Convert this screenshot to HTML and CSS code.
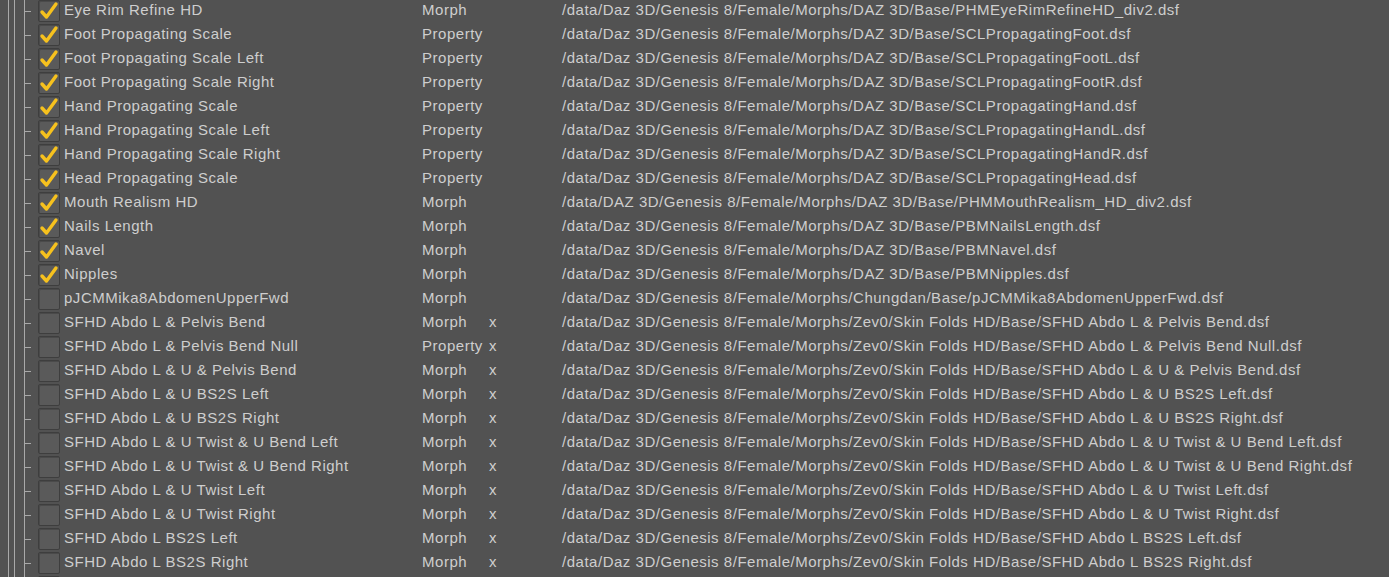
FILE: index.html
```html
<!DOCTYPE html>
<html lang="en">
<head>
    <meta charset="UTF-8">
    <title>Morph List</title>
    <link rel="stylesheet" href="styles.css">
</head>
<body>
    <div class="list">
        <div class="row"><span class="tree"></span><span class="check on"><svg viewBox="0 0 22 22"><path d="M4 12 L8.5 17 L18 4"/></svg></span><span class="name">Eye Rim Refine HD</span><span class="type">Morph</span><span class="flag"></span><span class="path">/data/Daz 3D/Genesis 8/Female/Morphs/DAZ 3D/Base/PHMEyeRimRefineHD_div2.dsf</span></div>
        <div class="row"><span class="tree"></span><span class="check on"><svg viewBox="0 0 22 22"><path d="M4 12 L8.5 17 L18 4"/></svg></span><span class="name">Foot Propagating Scale</span><span class="type">Property</span><span class="flag"></span><span class="path">/data/Daz 3D/Genesis 8/Female/Morphs/DAZ 3D/Base/SCLPropagatingFoot.dsf</span></div>
        <div class="row"><span class="tree"></span><span class="check on"><svg viewBox="0 0 22 22"><path d="M4 12 L8.5 17 L18 4"/></svg></span><span class="name">Foot Propagating Scale Left</span><span class="type">Property</span><span class="flag"></span><span class="path">/data/Daz 3D/Genesis 8/Female/Morphs/DAZ 3D/Base/SCLPropagatingFootL.dsf</span></div>
        <div class="row"><span class="tree"></span><span class="check on"><svg viewBox="0 0 22 22"><path d="M4 12 L8.5 17 L18 4"/></svg></span><span class="name">Foot Propagating Scale Right</span><span class="type">Property</span><span class="flag"></span><span class="path">/data/Daz 3D/Genesis 8/Female/Morphs/DAZ 3D/Base/SCLPropagatingFootR.dsf</span></div>
        <div class="row"><span class="tree"></span><span class="check on"><svg viewBox="0 0 22 22"><path d="M4 12 L8.5 17 L18 4"/></svg></span><span class="name">Hand Propagating Scale</span><span class="type">Property</span><span class="flag"></span><span class="path">/data/Daz 3D/Genesis 8/Female/Morphs/DAZ 3D/Base/SCLPropagatingHand.dsf</span></div>
        <div class="row"><span class="tree"></span><span class="check on"><svg viewBox="0 0 22 22"><path d="M4 12 L8.5 17 L18 4"/></svg></span><span class="name">Hand Propagating Scale Left</span><span class="type">Property</span><span class="flag"></span><span class="path">/data/Daz 3D/Genesis 8/Female/Morphs/DAZ 3D/Base/SCLPropagatingHandL.dsf</span></div>
        <div class="row"><span class="tree"></span><span class="check on"><svg viewBox="0 0 22 22"><path d="M4 12 L8.5 17 L18 4"/></svg></span><span class="name">Hand Propagating Scale Right</span><span class="type">Property</span><span class="flag"></span><span class="path">/data/Daz 3D/Genesis 8/Female/Morphs/DAZ 3D/Base/SCLPropagatingHandR.dsf</span></div>
        <div class="row"><span class="tree"></span><span class="check on"><svg viewBox="0 0 22 22"><path d="M4 12 L8.5 17 L18 4"/></svg></span><span class="name">Head Propagating Scale</span><span class="type">Property</span><span class="flag"></span><span class="path">/data/Daz 3D/Genesis 8/Female/Morphs/DAZ 3D/Base/SCLPropagatingHead.dsf</span></div>
        <div class="row"><span class="tree"></span><span class="check on"><svg viewBox="0 0 22 22"><path d="M4 12 L8.5 17 L18 4"/></svg></span><span class="name">Mouth Realism HD</span><span class="type">Morph</span><span class="flag"></span><span class="path">/data/DAZ 3D/Genesis 8/Female/Morphs/DAZ 3D/Base/PHMMouthRealism_HD_div2.dsf</span></div>
        <div class="row"><span class="tree"></span><span class="check on"><svg viewBox="0 0 22 22"><path d="M4 12 L8.5 17 L18 4"/></svg></span><span class="name">Nails Length</span><span class="type">Morph</span><span class="flag"></span><span class="path">/data/Daz 3D/Genesis 8/Female/Morphs/DAZ 3D/Base/PBMNailsLength.dsf</span></div>
        <div class="row"><span class="tree"></span><span class="check on"><svg viewBox="0 0 22 22"><path d="M4 12 L8.5 17 L18 4"/></svg></span><span class="name">Navel</span><span class="type">Morph</span><span class="flag"></span><span class="path">/data/Daz 3D/Genesis 8/Female/Morphs/DAZ 3D/Base/PBMNavel.dsf</span></div>
        <div class="row"><span class="tree"></span><span class="check on"><svg viewBox="0 0 22 22"><path d="M4 12 L8.5 17 L18 4"/></svg></span><span class="name">Nipples</span><span class="type">Morph</span><span class="flag"></span><span class="path">/data/Daz 3D/Genesis 8/Female/Morphs/DAZ 3D/Base/PBMNipples.dsf</span></div>
        <div class="row"><span class="tree"></span><span class="check"></span><span class="name">pJCMMika8AbdomenUpperFwd</span><span class="type">Morph</span><span class="flag"></span><span class="path">/data/Daz 3D/Genesis 8/Female/Morphs/Chungdan/Base/pJCMMika8AbdomenUpperFwd.dsf</span></div>
        <div class="row"><span class="tree"></span><span class="check"></span><span class="name">SFHD Abdo L &amp; Pelvis Bend</span><span class="type">Morph</span><span class="flag">x</span><span class="path">/data/Daz 3D/Genesis 8/Female/Morphs/Zev0/Skin Folds HD/Base/SFHD Abdo L &amp; Pelvis Bend.dsf</span></div>
        <div class="row"><span class="tree"></span><span class="check"></span><span class="name">SFHD Abdo L &amp; Pelvis Bend Null</span><span class="type">Property</span><span class="flag">x</span><span class="path">/data/Daz 3D/Genesis 8/Female/Morphs/Zev0/Skin Folds HD/Base/SFHD Abdo L &amp; Pelvis Bend Null.dsf</span></div>
        <div class="row"><span class="tree"></span><span class="check"></span><span class="name">SFHD Abdo L &amp; U &amp; Pelvis Bend</span><span class="type">Morph</span><span class="flag">x</span><span class="path">/data/Daz 3D/Genesis 8/Female/Morphs/Zev0/Skin Folds HD/Base/SFHD Abdo L &amp; U &amp; Pelvis Bend.dsf</span></div>
        <div class="row"><span class="tree"></span><span class="check"></span><span class="name">SFHD Abdo L &amp; U BS2S Left</span><span class="type">Morph</span><span class="flag">x</span><span class="path">/data/Daz 3D/Genesis 8/Female/Morphs/Zev0/Skin Folds HD/Base/SFHD Abdo L &amp; U BS2S Left.dsf</span></div>
        <div class="row"><span class="tree"></span><span class="check"></span><span class="name">SFHD Abdo L &amp; U BS2S Right</span><span class="type">Morph</span><span class="flag">x</span><span class="path">/data/Daz 3D/Genesis 8/Female/Morphs/Zev0/Skin Folds HD/Base/SFHD Abdo L &amp; U BS2S Right.dsf</span></div>
        <div class="row"><span class="tree"></span><span class="check"></span><span class="name">SFHD Abdo L &amp; U Twist &amp; U Bend Left</span><span class="type">Morph</span><span class="flag">x</span><span class="path">/data/Daz 3D/Genesis 8/Female/Morphs/Zev0/Skin Folds HD/Base/SFHD Abdo L &amp; U Twist &amp; U Bend Left.dsf</span></div>
        <div class="row"><span class="tree"></span><span class="check"></span><span class="name">SFHD Abdo L &amp; U Twist &amp; U Bend Right</span><span class="type">Morph</span><span class="flag">x</span><span class="path">/data/Daz 3D/Genesis 8/Female/Morphs/Zev0/Skin Folds HD/Base/SFHD Abdo L &amp; U Twist &amp; U Bend Right.dsf</span></div>
        <div class="row"><span class="tree"></span><span class="check"></span><span class="name">SFHD Abdo L &amp; U Twist Left</span><span class="type">Morph</span><span class="flag">x</span><span class="path">/data/Daz 3D/Genesis 8/Female/Morphs/Zev0/Skin Folds HD/Base/SFHD Abdo L &amp; U Twist Left.dsf</span></div>
        <div class="row"><span class="tree"></span><span class="check"></span><span class="name">SFHD Abdo L &amp; U Twist Right</span><span class="type">Morph</span><span class="flag">x</span><span class="path">/data/Daz 3D/Genesis 8/Female/Morphs/Zev0/Skin Folds HD/Base/SFHD Abdo L &amp; U Twist Right.dsf</span></div>
        <div class="row"><span class="tree"></span><span class="check"></span><span class="name">SFHD Abdo L BS2S Left</span><span class="type">Morph</span><span class="flag">x</span><span class="path">/data/Daz 3D/Genesis 8/Female/Morphs/Zev0/Skin Folds HD/Base/SFHD Abdo L BS2S Left.dsf</span></div>
        <div class="row"><span class="tree"></span><span class="check"></span><span class="name">SFHD Abdo L BS2S Right</span><span class="type">Morph</span><span class="flag">x</span><span class="path">/data/Daz 3D/Genesis 8/Female/Morphs/Zev0/Skin Folds HD/Base/SFHD Abdo L BS2S Right.dsf</span></div>
        <div class="row"><span class="tree"></span><span class="check"></span></div>
    </div>
</body>
</html>
```

FILE: styles.css
```css
html, body {
    height: 100%;
}
body {
    margin: 0;
    background: #525252;
    color: #cecece;
    font-family: "Liberation Sans", Arial, sans-serif;
    font-size: 15px;
    letter-spacing: 0.52px;
    overflow: hidden;
}
.list {
    margin-top: -2px;
}
.row {
    display: flex;
    align-items: center;
    height: 24px;
    line-height: 24px;
    white-space: nowrap;
}
.tree {
    flex: none;
    width: 38px;
    height: 24px;
    background:
        linear-gradient(#a9a9a9, #a9a9a9) 8px 0 / 1px 100% no-repeat,
        linear-gradient(#a9a9a9, #a9a9a9) 14px 0 / 1px 100% no-repeat,
        linear-gradient(#a9a9a9, #a9a9a9) 24px 0 / 1px 100% no-repeat,
        linear-gradient(#a9a9a9, #a9a9a9) 24px 13px / 7px 1px no-repeat;
}
.check {
    flex: none;
    box-sizing: border-box;
    width: 22px;
    height: 22px;
    margin-top: 2px;
    border: 1px solid #3e3e3e;
    border-radius: 2px;
    background: #5a5a5a;
    box-shadow: inset 1px 1px 0 #4a4a4a;
}
.check svg {
    display: block;
    width: 22px;
    height: 22px;
    margin: -1px 0 0 -1px;
}
.check path {
    fill: none;
    stroke: #f6c11e;
    stroke-width: 3.4;
    stroke-linecap: round;
    stroke-linejoin: round;
}
.name {
    flex: none;
    width: 358px;
    margin-left: 4px;
}
.type {
    flex: none;
    width: 67px;
}
.flag {
    flex: none;
    width: 73px;
}
```
